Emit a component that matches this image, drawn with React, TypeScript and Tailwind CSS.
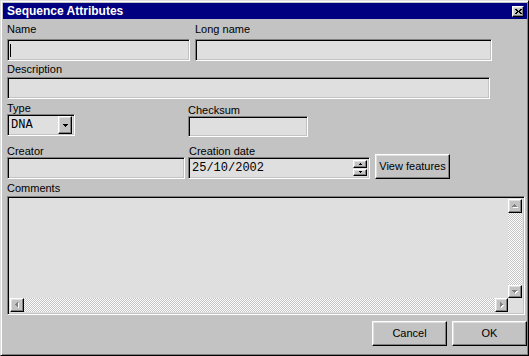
import React from "react";

const sans = "font-['Liberation_Sans',Arial,sans-serif]";
const mono = "font-['Liberation_Mono','Courier_New',monospace]";

// classic 3d borders
const sunken =
  "border border-t-[#808080] border-l-[#808080] border-r-white border-b-white shadow-[inset_1px_1px_0_#000,inset_-1px_-1px_0_#c3c3c3] bg-[#dfdfdf]";
const raised =
  "border border-t-white border-l-white border-r-black border-b-black shadow-[inset_-1px_-1px_0_#808080,inset_1px_1px_0_#dfdfdf] bg-[#c3c3c3]";
const checker =
  "bg-[image:repeating-conic-gradient(#c3c3c3_0%_25%,#ffffff_0%_50%)] bg-[length:2px_2px]";

type Dir = "up" | "down" | "left" | "right";

function Arrow({ dir, n, color = "#000", etched = false }: { dir: Dir; n: number; color?: string; etched?: boolean }) {
  const span = 2 * n - 1;
  const vertical = dir === "up" || dir === "down";
  const rects: { x: number; y: number; w: number; h: number }[] = [];
  for (let i = 0; i < n; i++) {
    const len = dir === "down" || dir === "right" ? 2 * (n - i) - 1 : 2 * i + 1;
    const off = (span - len) / 2;
    if (vertical) rects.push({ x: off, y: i, w: len, h: 1 });
    else rects.push({ x: i, y: off, w: 1, h: len });
  }
  const extra = etched ? 1 : 0;
  return (
    <svg width={(vertical ? span : n) + extra} height={(vertical ? n : span) + extra} shapeRendering="crispEdges">
      {etched && rects.map((r, i) => <rect key={"s" + i} x={r.x + 1} y={r.y + 1} width={r.w} height={r.h} fill="#fff" />)}
      {rects.map((r, i) => (
        <rect key={i} x={r.x} y={r.y} width={r.w} height={r.h} fill={color} />
      ))}
    </svg>
  );
}

function Label({ children, className = "" }: { children: React.ReactNode; className?: string }) {
  return <div className={`text-[11px] leading-[13px] text-black ${className}`}>{children}</div>;
}

function ScrollBtn({ dir, className = "" }: { dir: Dir; className?: string }) {
  return (
    <div className={`${raised} flex items-center justify-center shrink-0 ${className}`}>
      <Arrow dir={dir} n={3} color="#808080" etched />
    </div>
  );
}

function Button({ children, className = "" }: { children: React.ReactNode; className?: string }) {
  return (
    <button className={`${raised} w-[75px] h-[25px] flex items-center justify-center text-[11px] text-black ${className}`}>
      {children}
    </button>
  );
}

export default function App() {
  return (
    <div
      className={`${sans} w-[529px] h-[356px] bg-[#c3c3c3] border border-t-[#dfdfdf] border-l-[#dfdfdf] border-r-black border-b-black shadow-[inset_1px_1px_0_#fff,inset_-1px_-1px_0_#808080] pt-[2px] pl-[2px] pr-[1px] flex flex-col overflow-hidden`}
    >
      {/* title bar */}
      <div className="h-[16px] bg-[#000080] flex items-center justify-between pl-[4px] pr-[3px] shrink-0">
        <span className="text-white font-bold text-[12px] leading-[16px]">Sequence Attributes</span>
        <div className={`${raised} w-[12px] h-[11px] flex items-center justify-center`}>
          <svg width="7" height="5" shapeRendering="crispEdges">
            <rect x="0" y="0" width="2" height="1" fill="#000" />
            <rect x="5" y="0" width="2" height="1" fill="#000" />
            <rect x="1" y="1" width="2" height="1" fill="#000" />
            <rect x="4" y="1" width="2" height="1" fill="#000" />
            <rect x="2" y="2" width="3" height="1" fill="#000" />
            <rect x="1" y="3" width="2" height="1" fill="#000" />
            <rect x="4" y="3" width="2" height="1" fill="#000" />
            <rect x="0" y="4" width="2" height="1" fill="#000" />
            <rect x="5" y="4" width="2" height="1" fill="#000" />
          </svg>
        </div>
      </div>

      <div className="pl-[4px] flex flex-col">
        {/* name / long name */}
        <div className="flex gap-[5px] mt-[4px]">
          <div className="flex flex-col w-[183px]">
            <Label>Name</Label>
            <div className={`${sunken} h-[22px] mt-[3px] flex items-center pl-[2px]`}>
              <div className="w-px h-[13px] bg-black" />
            </div>
          </div>
          <div className="flex flex-col w-[297px]">
            <Label>Long name</Label>
            <div className={`${sunken} h-[22px] mt-[3px]`} />
          </div>
        </div>

        {/* description */}
        <Label className="mt-[2px]">Description</Label>
        <div className={`${sunken} w-[483px] h-[22px] mt-[1px]`} />

        {/* type / checksum */}
        <div className="flex items-start mt-[3px]">
          <div className="flex flex-col w-[181px]">
            <Label>Type</Label>
            <div className={`${sunken} w-[68px] h-[22px] mt-[-1px] flex items-center justify-between p-[2px]`}>
              <span className={`${mono} text-[12px] leading-[14px] pl-[1px] text-black`}>DNA</span>
              <div className={`${raised} w-[14px] h-[18px] flex items-center justify-center`}>
                <Arrow dir="down" n={3} />
              </div>
            </div>
          </div>
          <div className="flex flex-col w-[120px] mt-[2px]">
            <Label>Checksum</Label>
            <div className={`${sunken} h-[21px] mt-[-1px]`} />
          </div>
        </div>

        {/* creator / date / view features */}
        <div className="flex items-end mt-[8px]">
          <div className="flex flex-col w-[178px]">
            <Label>Creator</Label>
            <div className={`${sunken} h-[22px] mt-[-1px]`} />
          </div>
          <div className="flex flex-col w-[182px] ml-[3px]">
            <Label className="pl-[1px]">Creation date</Label>
            <div className={`${sunken} h-[22px] mt-[-1px] flex items-center justify-between p-[2px]`}>
              <span className={`${mono} text-[12px] leading-[14px] pl-[1px] text-black`}>25/10/2002</span>
              <div className="flex flex-col gap-[1px] h-full justify-center">
                <div className={`${raised} w-[14px] h-[9px] flex items-center justify-center`}>
                  <Arrow dir="up" n={2} />
                </div>
                <div className={`${raised} w-[14px] h-[8px] flex items-center justify-center`}>
                  <Arrow dir="down" n={2} />
                </div>
              </div>
            </div>
          </div>
          <Button className="ml-[5px]">View features</Button>
        </div>

        {/* comments */}
        <Label className="mt-[3px]">Comments</Label>
        <div className={`${sunken} w-[518px] h-[119px] mt-[1px] p-[2px] flex flex-col`}>
          <div className="flex flex-1">
            <div className="flex-1" />
            <div className="w-[14px] flex flex-col">
              <ScrollBtn dir="up" className="h-[14px]" />
              <div className={`flex-1 ${checker}`} />
              <ScrollBtn dir="down" className="h-[13px]" />
            </div>
          </div>
          <div className="flex h-[14px]">
            <ScrollBtn dir="left" className="w-[14px]" />
            <div className={`flex-1 ${checker}`} />
            <ScrollBtn dir="right" className="w-[13px]" />
            <div className="w-[14px]" />
          </div>
        </div>

        {/* footer buttons */}
        <div className="flex justify-end gap-[5px] mt-[6px]">
          <Button>Cancel</Button>
          <Button>OK</Button>
        </div>
      </div>
    </div>
  );
}
